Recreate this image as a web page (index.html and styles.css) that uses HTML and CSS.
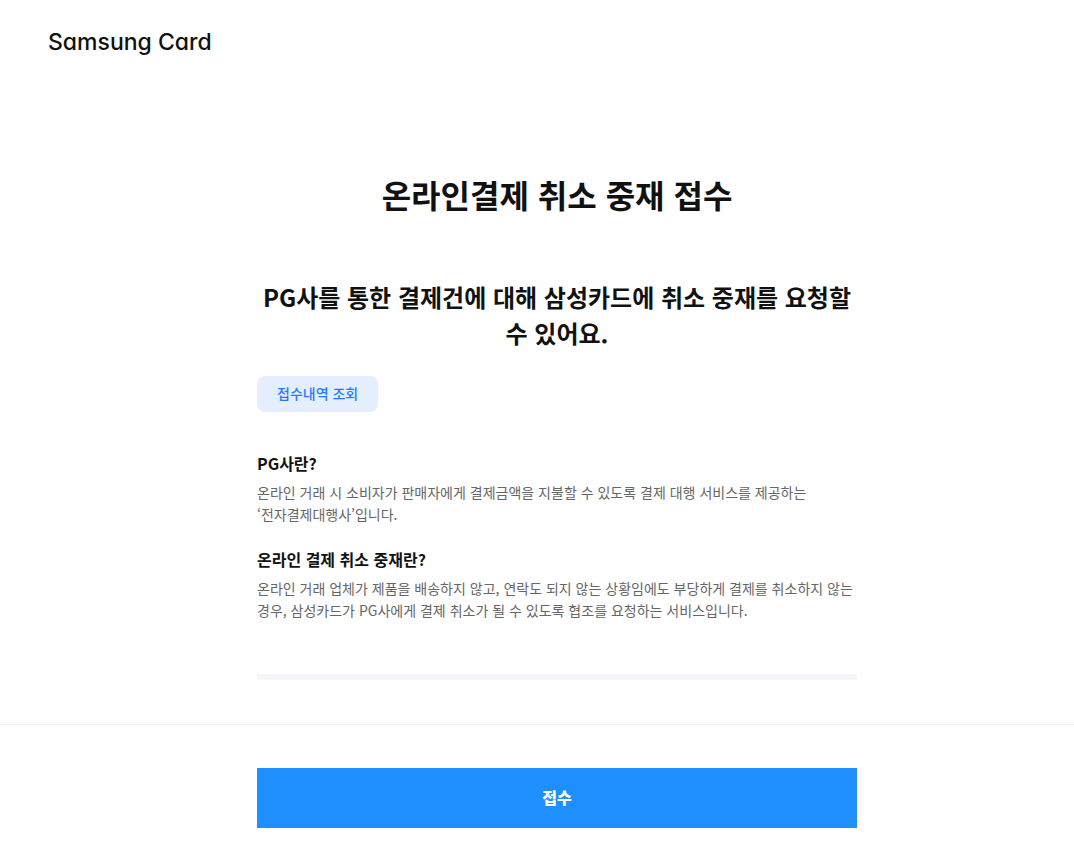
FILE: index.html
```
<!DOCTYPE html>
<html lang="ko">
<head>
    <meta charset="UTF-8">
    <meta name="viewport" content="width=device-width, initial-scale=1.0">
    <title>온라인결제 취소 중재 접수</title>
    <link rel="stylesheet" href="styles.css">
</head>

<body>
    <header class="header">
        <a href="#" class="logo">Samsung Card</a>
    </header>

    <main class="main">
        <div class="content">
            <h1>온라인결제 취소 중재 접수</h1>
            <h2>PG사를 통한 결제건에 대해 삼성카드에 취소 중재를 요청할 수 있어요.</h2>
            <button type="button" class="btn-history">접수내역 조회</button>

            <section class="info">
                <h3>PG사란?</h3>
                <p>온라인 거래 시 소비자가 판매자에게 결제금액을 지불할 수 있도록 결제 대행 서비스를 제공하는 ‘전자결제대행사’입니다.</p>
            </section>
            <section class="info">
                <h3>온라인 결제 취소 중재란?</h3>
                <p>온라인 거래 업체가 제품을 배송하지 않고, 연락도 되지 않는 상황임에도 부당하게 결제를 취소하지 않는 경우, 삼성카드가 PG사에게 결제 취소가 될 수 있도록 협조를 요청하는 서비스입니다.</p>
            </section>

            <hr class="bar">
        </div>
    </main>

    <footer class="footer">
        <div class="content">
            <button type="submit" class="btn-submit">접수</button>
        </div>
    </footer>
</body>
</html>
```
FILE: styles.css
```
* {
    box-sizing: border-box;
}
body {
    margin: 0;
    font-family: "Noto Sans CJK KR", sans-serif;
    font-size: 14px;
    line-height: 22px;
    color: #111;
    background: #fff;
    word-break: keep-all;
}
h1, h2, h3, p {
    margin: 0;
}
button {
    padding: 0 20px 2px;
    font-family: inherit;
    border: none;
    cursor: pointer;
}
.header {
    padding: 24px 48px;
}
.logo {
    display: block;
    font-family: Inter, sans-serif;
    font-size: 23px;
    font-weight: 500;
    font-feature-settings: "cv11";
    line-height: 36px;
    color: #111;
    text-decoration: none;
}
.main, .footer {
    padding-left: 40px;
}
.content {
    max-width: 600px;
    margin: 0 auto;
}
h1 {
    padding: 86px 0 61px;
    font-size: 32px;
    line-height: 48px;
    text-align: center;
}
h2 {
    margin-bottom: 25px;
    font-size: 24px;
    line-height: 36px;
    text-align: center;
}
.btn-history {
    display: block;
    margin-bottom: 39px;
    height: 36px;
    font-size: 14px;
    font-weight: 500;
    color: #1e7bff;
    background: #e5eeff;
    border-radius: 8px;
}
.info {
    margin-bottom: 22px;
}
.info h3 {
    margin-bottom: 6px;
    font-size: 16px;
    line-height: 24px;
}
.info p {
    color: #666;
}
.bar {
    height: 6px;
    margin: 53px 0 44px;
    border: none;
    background: #f4f5fc;
}
.footer {
    padding-top: 43px;
    padding-bottom: 40px;
    border-top: 1px solid #f3f3f5;
}
.btn-submit {
    display: block;
    width: 100%;
    height: 60px;
    font-size: 16px;
    font-weight: 900;
    color: #fff;
    background: #1f8fff;
}
```
